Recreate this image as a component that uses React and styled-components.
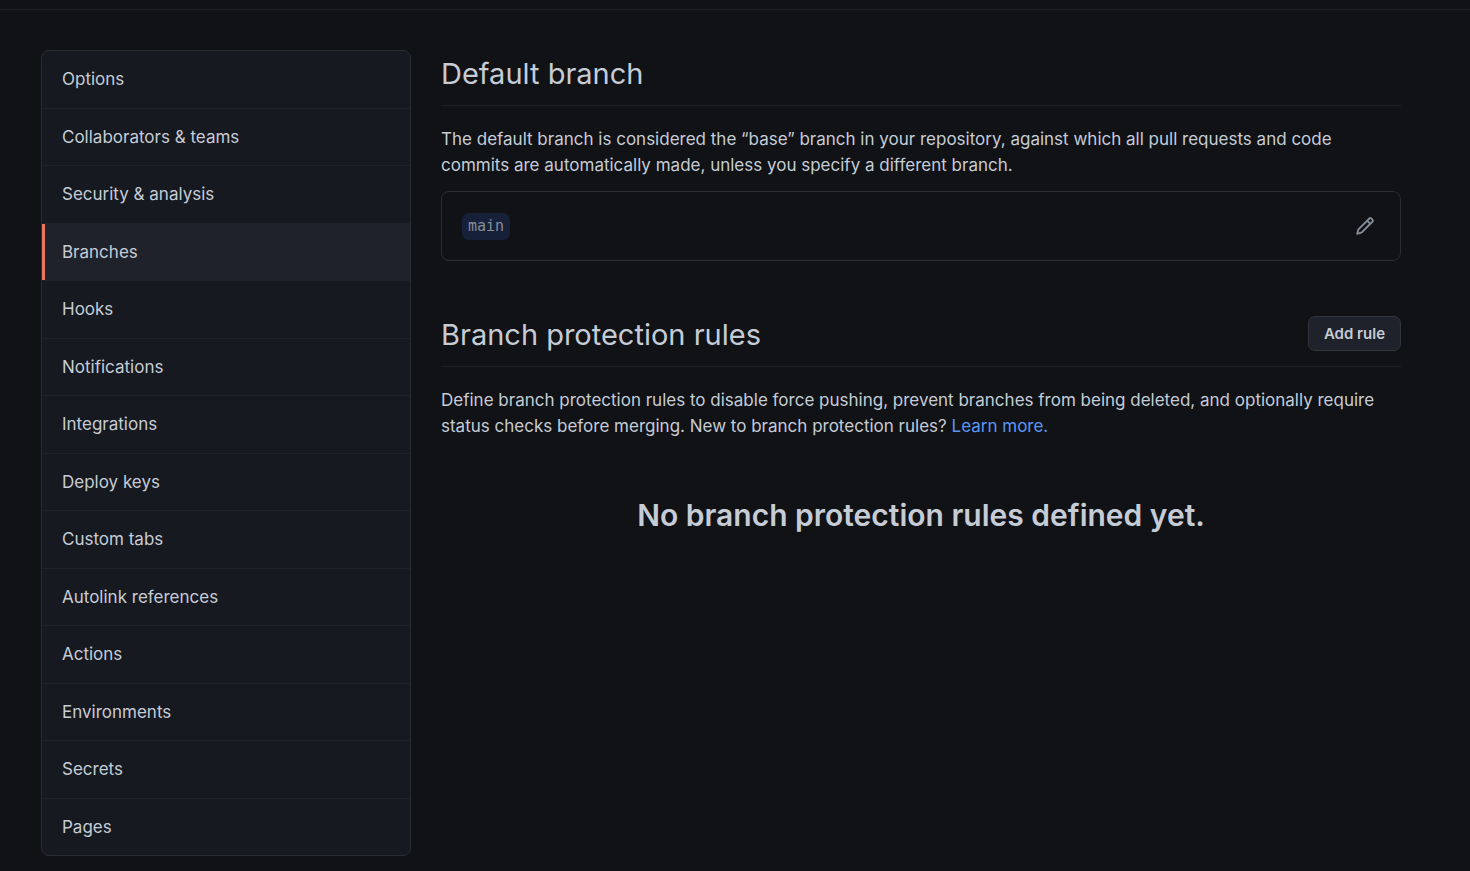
import React from "react";
import styled, { createGlobalStyle } from "styled-components";

const GlobalStyle = createGlobalStyle`
  *, *::before, *::after { box-sizing: border-box; }
  body {
    margin: 0;
    background: #101216;
    color: #c6ccd5;
    font-family: Inter, "Liberation Sans", sans-serif;
    font-size: 17px;
    font-weight: 400;
    line-height: 26px;
  }
`;

const TopBar = styled.header`
  height: 10px;
  border-bottom: 1px solid #1f2126;
`;

const Page = styled.div`
  display: grid;
  grid-template-columns: 370px minmax(0, 1fr);
  gap: 30px;
  align-items: start;
  padding: 40px 69px 15px 41px;
`;

const Menu = styled.nav`
  overflow: hidden;
  border: 1px solid #2a2c31;
  border-radius: 8px;
  background: #161920;
`;

const MenuItem = styled.a`
  display: flex;
  align-items: center;
  height: 57px;
  padding: 0 20px 1px;
  border-bottom: 1px solid #1f2228;
  box-shadow: ${(p) => (p.$active ? "inset 3px 0 #ec775c" : "none")};
  background: ${(p) => (p.$active ? "#1f222a" : "transparent")};
  color: inherit;
  text-decoration: none;

  &:nth-child(odd) { height: 58px; }
  &:last-child { height: 56px; border-bottom: 0; }
`;

const Section = styled.section`
  margin-bottom: 50px;
`;

const SectionHeader = styled.div`
  display: flex;
  align-items: center;
  justify-content: space-between;
  height: 56px;
  padding-bottom: 10px;
  margin-bottom: 20px;
  border-bottom: 1px solid #1f2126;
`;

const Title = styled.h2`
  margin: 0;
  padding-top: 3px;
  font-size: 29px;
  font-weight: 400;
  line-height: 42px;
`;

const Text = styled.p`
  margin: 0;
`;

const Link = styled.a`
  color: #5b97f2;
  text-decoration: none;
`;

const BranchBox = styled.div`
  display: flex;
  align-items: center;
  justify-content: space-between;
  height: 70px;
  margin-top: 13px;
  padding: 0 20px;
  border: 1px solid #2a2c31;
  border-radius: 8px;
`;

const BranchName = styled.code`
  padding: 0 6px;
  border-radius: 7px;
  background: #172039;
  color: #858d97;
  font-family: "DejaVu Sans Mono", monospace;
  font-size: 15px;
  line-height: 27px;
`;

const IconButton = styled.button`
  display: flex;
  padding: 5px;
  border: 0;
  background: none;
  color: #858d97;
  cursor: pointer;
`;

const Button = styled.button`
  height: 35px;
  padding: 0 15px;
  border: 1px solid #32353c;
  border-radius: 7px;
  background: #1f222a;
  color: inherit;
  font: 600 15px/20px Inter, "Liberation Sans", sans-serif;
  cursor: pointer;
`;

const EmptyMessage = styled.h3`
  margin: 54px 0 0;
  font-size: 30px;
  font-weight: 600;
  line-height: 44px;
  text-align: center;
`;

const items = [
  "Options",
  "Collaborators & teams",
  "Security & analysis",
  "Branches",
  "Hooks",
  "Notifications",
  "Integrations",
  "Deploy keys",
  "Custom tabs",
  "Autolink references",
  "Actions",
  "Environments",
  "Secrets",
  "Pages",
];

function PencilIcon() {
  return (
    <svg width="20" height="20" viewBox="0 0 16 16" fill="currentColor" aria-hidden="true">
      <path
        fillRule="evenodd"
        d="M11.013 1.427a1.75 1.75 0 012.474 0l1.086 1.086a1.75 1.75 0 010 2.474l-8.61 8.61c-.21.21-.47.364-.756.445l-3.251.93a.75.75 0 01-.927-.928l.929-3.25a1.75 1.75 0 01.445-.758l8.61-8.61zm1.414 1.06a.25.25 0 00-.354 0L10.811 3.75l1.439 1.44 1.263-1.263a.25.25 0 000-.354l-1.086-1.086zM11.189 6.25L9.75 4.81l-6.286 6.287a.25.25 0 00-.064.108l-.558 1.953 1.953-.558a.249.249 0 00.108-.064l6.286-6.286z"
      />
    </svg>
  );
}

export default function App() {
  return (
    <>
      <GlobalStyle />
      <TopBar />
      <Page>
        <Menu aria-label="Repository settings">
          {items.map((name) => (
            <MenuItem
              key={name}
              href="#"
              $active={name === "Branches"}
              aria-current={name === "Branches" ? "page" : undefined}
            >
              {name}
            </MenuItem>
          ))}
        </Menu>
        <main>
          <Section>
            <SectionHeader>
              <Title>Default branch</Title>
            </SectionHeader>
            <Text>
              The default branch is considered the “base” branch in your repository, against which
              all pull requests and code commits are automatically made, unless you specify a
              different branch.
            </Text>
            <BranchBox>
              <BranchName>main</BranchName>
              <IconButton type="button" aria-label="Switch default branch">
                <PencilIcon />
              </IconButton>
            </BranchBox>
          </Section>
          <Section>
            <SectionHeader>
              <Title>Branch protection rules</Title>
              <Button type="button">Add rule</Button>
            </SectionHeader>
            <Text>
              Define branch protection rules to disable force pushing, prevent branches from being
              deleted, and optionally require status checks before merging. New to branch
              protection rules? <Link href="#">Learn more.</Link>
            </Text>
            <EmptyMessage>No branch protection rules defined yet.</EmptyMessage>
          </Section>
        </main>
      </Page>
    </>
  );
}
